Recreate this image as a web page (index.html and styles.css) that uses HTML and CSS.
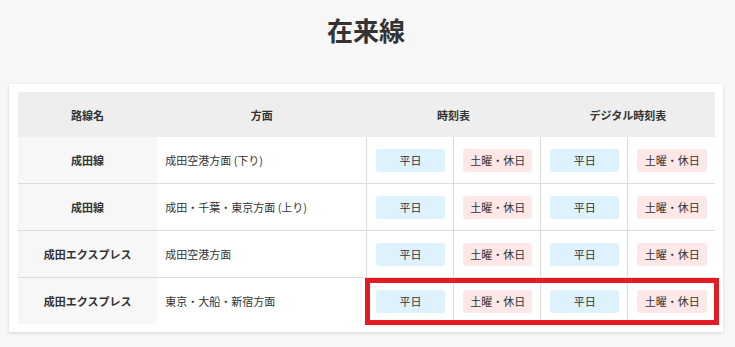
FILE: index.html
```html
<!DOCTYPE html>
<html lang="ja">
<head>
    <meta charset="UTF-8">
    <meta name="viewport" content="width=device-width, initial-scale=1.0">
    <title>在来線</title>
    <link rel="stylesheet" href="styles.css">
</head>
<body>
<div class="page">
    <h1 class="page-title">在来線</h1>

    <div class="card">
        <table class="timetable">
            <colgroup>
                <col class="col-line">
                <col class="col-dir">
                <col class="col-day">
                <col class="col-day">
                <col class="col-day">
                <col class="col-day">
            </colgroup>
            <thead>
                <tr>
                    <th>路線名</th>
                    <th>方面</th>
                    <th colspan="2">時刻表</th>
                    <th colspan="2">デジタル時刻表</th>
                </tr>
            </thead>
            <tbody>
                <tr>
                    <td class="line-name">成田線</td>
                    <td class="direction">成田空港方面 (下り)</td>
                    <td class="slot"><a class="badge weekday" href="#">平日</a></td>
                    <td class="slot"><a class="badge holiday" href="#">土曜・休日</a></td>
                    <td class="slot"><a class="badge weekday" href="#">平日</a></td>
                    <td class="slot"><a class="badge holiday" href="#">土曜・休日</a></td>
                </tr>
                <tr>
                    <td class="line-name">成田線</td>
                    <td class="direction">成田・千葉・東京方面 (上り)</td>
                    <td class="slot"><a class="badge weekday" href="#">平日</a></td>
                    <td class="slot"><a class="badge holiday" href="#">土曜・休日</a></td>
                    <td class="slot"><a class="badge weekday" href="#">平日</a></td>
                    <td class="slot"><a class="badge holiday" href="#">土曜・休日</a></td>
                </tr>
                <tr>
                    <td class="line-name">成田エクスプレス</td>
                    <td class="direction">成田空港方面</td>
                    <td class="slot"><a class="badge weekday" href="#">平日</a></td>
                    <td class="slot"><a class="badge holiday" href="#">土曜・休日</a></td>
                    <td class="slot"><a class="badge weekday" href="#">平日</a></td>
                    <td class="slot"><a class="badge holiday" href="#">土曜・休日</a></td>
                </tr>
                <tr class="marked">
                    <td class="line-name">成田エクスプレス</td>
                    <td class="direction">東京・大船・新宿方面</td>
                    <td class="slot mark-cell"><a class="badge weekday" href="#">平日</a><span class="mark"></span></td>
                    <td class="slot"><a class="badge holiday" href="#">土曜・休日</a></td>
                    <td class="slot"><a class="badge weekday" href="#">平日</a></td>
                    <td class="slot"><a class="badge holiday" href="#">土曜・休日</a></td>
                </tr>
            </tbody>
        </table>
    </div>
</div>
</body>
</html>
```

FILE: styles.css
```css
body {
    margin: 0;
    background-color: #f7f7f7;
    font-family: "Noto Sans CJK JP", "Noto Sans", sans-serif;
    color: #333;
}

.page {
    padding: 12px 12px 16px 9px;
}

.page-title {
    margin: 0 0 36px;
    text-align: center;
    font-size: 26px;
    line-height: 36px;
    font-weight: bold;
}

.card {
    background-color: #fff;
    padding: 8px 8px 8px 9px;
    box-shadow: 0 1px 3px rgba(0, 0, 0, 0.15);
}

.timetable {
    width: 697px;
    border-collapse: collapse;
    table-layout: fixed;
    font-size: 11px;
}

.col-line { width: 139px; }
.col-dir { width: 209px; }
.col-day { width: 87px; }

.timetable th {
    height: 45px;
    padding: 0;
    background-color: #eee;
    font-weight: bold;
    text-align: center;
}

.timetable td {
    height: 46px;
    padding: 0;
    border-top: 1px solid #ddd;
}

.timetable tbody tr:first-child td {
    border-top: none;
    height: 46px;
}

.line-name {
    background-color: #f7f7f7;
    font-weight: bold;
    text-align: center;
}

.direction {
    padding-left: 8px !important;
}

.slot {
    border-left: 1px solid #ddd;
    text-align: center;
}

.badge {
    display: block;
    margin: 0 8px 0 9px;
    height: 23px;
    line-height: 23px;
    border-radius: 3px;
    color: #333;
    text-decoration: none;
}

.weekday {
    background-color: #ddf2fd;
}

.holiday {
    background-color: #fde7e7;
}

/* red frame around the last row's timetable links */
.mark-cell {
    position: relative;
}

.mark {
    position: absolute;
    left: -2px;
    top: 0;
    width: 354px;
    height: 47px;
    box-sizing: border-box;
    border: 5px solid #e31b23;
    pointer-events: none;
}
```
